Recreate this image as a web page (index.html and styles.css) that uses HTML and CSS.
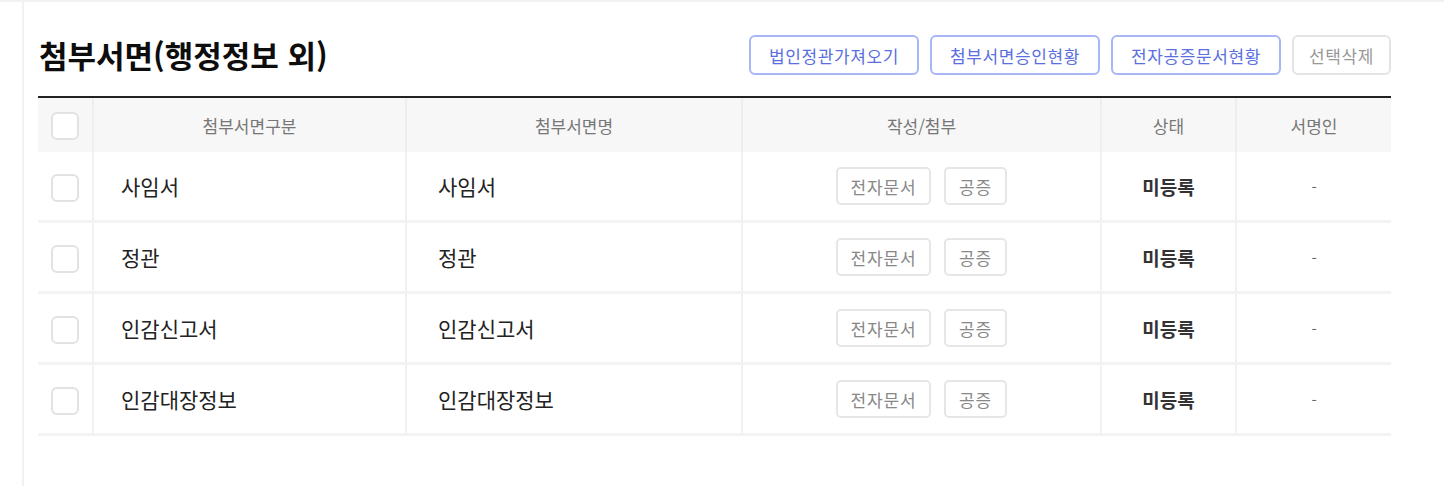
FILE: index.html
```html
<!DOCTYPE html>
<html lang="ko">
<head>
<meta charset="utf-8">
<title>첨부서면</title>
<link rel="stylesheet" href="styles.css">
</head>
<body>
<div class="page">
  <div class="panel">
    <div class="head">
      <h2 class="title">첨부서면(행정정보 외)</h2>
      <div class="actions">
        <button class="btn btn-blue">법인정관가져오기</button>
        <button class="btn btn-blue">첨부서면승인현황</button>
        <button class="btn btn-blue">전자공증문서현황</button>
        <button class="btn btn-gray">선택삭제</button>
      </div>
    </div>
    <div class="table-wrap">
    <table class="grid">
      <colgroup>
        <col class="c-chk"><col class="c-type"><col class="c-name"><col class="c-doc"><col class="c-state"><col class="c-sign">
      </colgroup>
      <thead>
        <tr>
          <th><span class="chk"></span></th>
          <th>첨부서면구분</th>
          <th>첨부서면명</th>
          <th>작성/첨부</th>
          <th>상태</th>
          <th>서명인</th>
        </tr>
      </thead>
      <tbody>
        <tr>
          <td class="cc"><span class="chk"></span></td>
          <td class="t-type">사임서</td>
          <td class="t-name">사임서</td>
          <td class="cc"><div class="docs"><button class="sbtn sbtn-wide">전자문서</button><button class="sbtn">공증</button></div></td>
          <td class="cc state">미등록</td>
          <td class="cc sign">-</td>
        </tr>
        <tr>
          <td class="cc"><span class="chk"></span></td>
          <td class="t-type">정관</td>
          <td class="t-name">정관</td>
          <td class="cc"><div class="docs"><button class="sbtn sbtn-wide">전자문서</button><button class="sbtn">공증</button></div></td>
          <td class="cc state">미등록</td>
          <td class="cc sign">-</td>
        </tr>
        <tr>
          <td class="cc"><span class="chk"></span></td>
          <td class="t-type">인감신고서</td>
          <td class="t-name">인감신고서</td>
          <td class="cc"><div class="docs"><button class="sbtn sbtn-wide">전자문서</button><button class="sbtn">공증</button></div></td>
          <td class="cc state">미등록</td>
          <td class="cc sign">-</td>
        </tr>
        <tr>
          <td class="cc"><span class="chk"></span></td>
          <td class="t-type">인감대장정보</td>
          <td class="t-name">인감대장정보</td>
          <td class="cc"><div class="docs"><button class="sbtn sbtn-wide">전자문서</button><button class="sbtn">공증</button></div></td>
          <td class="cc state">미등록</td>
          <td class="cc sign">-</td>
        </tr>
      </tbody>
    </table>
    </div>
  </div>
</div>
</body>
</html>
```

FILE: styles.css
```css
* { box-sizing: border-box; }
html, body {
  margin: 0;
  padding: 0;
  background: #fff;
  font-family: "Noto Sans CJK KR", "Noto Sans", sans-serif;
  color: #222;
}
.page {
  border-top: 2px solid #f2f2f2;
  height: 486px;
  overflow: hidden;
}
.panel {
  margin-left: 22px;
  border-left: 2px solid #f1f1f1;
  height: 100%;
  padding: 31px 53px 0 14px;
}
.head {
  display: flex;
  align-items: center;
  justify-content: space-between;
  height: 44px;
  margin-bottom: 19px;
}
.title {
  margin: 0;
  font-size: 31px;
  font-weight: 700;
  line-height: 38px;
  color: #0d0d0d;
  letter-spacing: 0;
  padding-left: 1px;
}
.actions {
  display: flex;
  gap: 11px;
}
.btn {
  height: 40px;
  border-radius: 6px;
  background: #fff;
  font-family: inherit;
  font-size: 17px;
  letter-spacing: 0.6px;
  line-height: 1;
  padding: 0;
  cursor: pointer;
}
.btn-blue {
  width: 170px;
  border: 2px solid #a8b6f6;
  color: #5a6fe0;
}
.btn-gray {
  width: 99px;
  border: 2px solid #e4e4e4;
  color: #999;
}
.table-wrap {
  width: 1353px;
  border-top: 2px solid #222;
}
.grid {
  width: 100%;
  border-collapse: separate;
  border-spacing: 0;
  table-layout: fixed;
}
.c-chk { width: 54px; }
.c-type { width: 313px; }
.c-name { width: 336px; }
.c-doc { width: 359px; }
.c-state { width: 135px; }
.c-sign { width: 156px; }
.grid th {
  height: 54px;
  background: #f7f7f7;
  font-size: 17px;
  font-weight: 400;
  color: #777;
  text-align: center;
  padding: 0;
  border-left: 2px solid #eeeeee;
}
.grid th:first-child, .grid td:first-child { border-left: none; }
.grid td {
  height: 71px;
  padding: 0;
  border-left: 2px solid #f1f1f1;
  border-bottom: 3px solid #f3f3f3;
  font-size: 21px;
  color: #222;
}
.cc { text-align: center; }
.t-type { padding-left: 27px !important; }
.t-name { padding-left: 31px !important; }
.chk {
  display: inline-block;
  width: 28px;
  height: 28px;
  border: 2px solid #e2e2e2;
  border-radius: 6px;
  background: #fff;
  vertical-align: middle;
}
.docs {
  display: flex;
  justify-content: center;
  gap: 13px;
}
.sbtn {
  width: 63px;
  height: 38px;
  border: 2px solid #e6e6e6;
  border-radius: 5px;
  background: #fff;
  color: #888;
  font-family: inherit;
  font-size: 17px;
  letter-spacing: 0.8px;
  padding: 0;
}
.sbtn-wide { width: 95px; }
.state {
  font-size: 19px !important;
  font-weight: 700;
  color: #333 !important;
}
.sign {
  font-size: 15px !important;
  color: #666 !important;
}
```
